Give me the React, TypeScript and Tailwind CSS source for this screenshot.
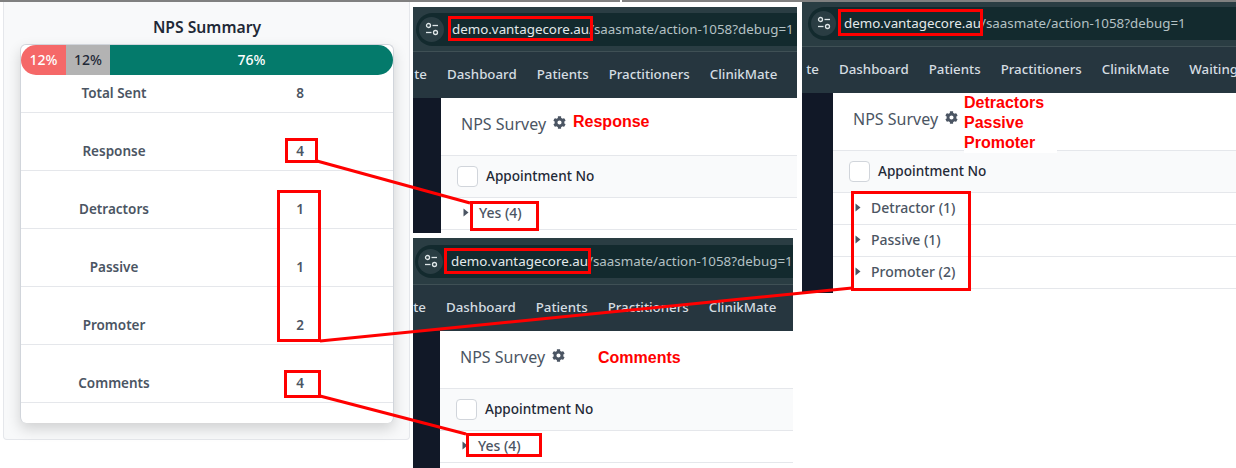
import { FaCog } from "react-icons/fa";

const font = { fontFamily: '"Noto Sans", sans-serif' };

const stats = [
  { label: "Total Sent", value: "8", tall: false },
  { label: "Response", value: "4", tall: true },
  { label: "Detractors", value: "1", tall: true },
  { label: "Passive", value: "1", tall: true },
  { label: "Promoter", value: "2", tall: true },
  { label: "Comments", value: "4", tall: true },
];

const navItems = ["Dashboard", "Patients", "Practitioners", "ClinikMate"];

const SiteIcon = () => (
  <svg width="14" height="14" viewBox="0 0 14 14" fill="none" stroke="#dfe6e8" strokeWidth="1.3">
    <circle cx="3.5" cy="3.5" r="2" />
    <path d="M7.5 3.5H13" />
    <circle cx="10.5" cy="10.5" r="2" />
    <path d="M1 10.5H6.5" />
  </svg>
);

const Caret = () => (
  <svg width="6" height="9" viewBox="0 0 6 9" className="shrink-0">
    <path d="M0.5 0.5L5.5 4.5L0.5 8.5Z" fill="#4b5563" />
  </svg>
);

type ShotProps = {
  className: string;
  strip: string;
  sidebar: string;
  crumb: string;
  nav: string[];
  rows: string[];
};

const Shot = ({ className, strip, sidebar, crumb, nav, rows }: ShotProps) => (
  <div className={`absolute flex flex-col overflow-hidden bg-white ${className}`}>
    <div className={`flex shrink-0 items-center border-b border-[#3f5055] bg-[#2a3d43] ${strip}`}>
      <div className="flex h-[33px] flex-1 items-center rounded-l-full bg-[#132a2e] pl-[3px]">
        <div className="grid h-[25px] w-[25px] shrink-0 place-items-center rounded-full bg-[#2a3d43]">
          <SiteIcon />
        </div>
        <div className="ml-[8px] whitespace-nowrap text-[13.35px] text-[#e3e9eb]">
          demo.vantagecore.au<span className="text-[#b4c1c4]">/saasmate/action-1058?debug=1</span>
        </div>
      </div>
    </div>
    <div className="flex h-[46px] shrink-0 items-center gap-[20px] overflow-hidden whitespace-nowrap bg-[#26363f] text-[13.3px] font-medium text-[#d5dde2]">
      <span className={`flex shrink-0 justify-end overflow-hidden ${crumb}`}>te</span>
      {nav.map((item) => (
        <span key={item}>{item}</span>
      ))}
    </div>
    <div className="flex min-h-0 flex-1">
      <div className={`shrink-0 bg-[#111827] ${sidebar}`} />
      <div className="flex min-w-0 flex-1 flex-col bg-white">
        <div className="flex h-[57px] shrink-0 items-center pb-[6px] pl-[20px] text-[#4b5563]">
          <span className="text-[16px]">NPS Survey</span>
          <FaCog className="mb-[2px] ml-[7px] h-[13px] w-[13px] text-[#4b5563]" />
        </div>
        <div className="flex h-[43px] shrink-0 items-center border-y border-[#e5e7eb] bg-[#f9fafb] pl-[16px]">
          <div className="h-[21px] w-[21px] rounded-[4px] border border-[#d1d5db] bg-white" />
          <span className="ml-[8px] text-[13.6px] font-medium text-[#1f2937]">Appointment No</span>
        </div>
        {rows.map((row) => (
          <div key={row} className="flex h-[32px] shrink-0 items-center border-b border-[#e5e7eb] pb-[2px] pl-[22px] text-[14px] font-medium text-[#4b5563]">
            <Caret />
            <span className="ml-[10px]">{row}</span>
          </div>
        ))}
      </div>
    </div>
  </div>
);

const RedBox = ({ className }: { className: string }) => (
  <div className={`absolute border-[3px] border-[#ff0000] ${className}`} />
);

const RedLabel = ({ className, children }: { className: string; children: React.ReactNode }) => (
  <div className={`absolute text-[16px] font-bold leading-[20px] text-[#ff0000] [font-family:'Liberation_Sans',Arial,sans-serif] ${className}`}>
    {children}
  </div>
);

export default function App() {
  return (
    <div className="relative h-[468px] w-[1236px] overflow-hidden bg-white" style={font}>
      <div className="flex h-[2px] w-full gap-[2px]">
        <div className="w-[620px] bg-[#808080]" />
        <div className="flex-1 bg-[#808080]" />
      </div>

      {/* NPS summary panel */}
      <div className="absolute left-[3px] top-[2px] h-[438px] w-[407px] rounded-b-[4px] border-x border-b border-[#e5e7eb] bg-[#f8f9fa] pl-[16px] pr-[15px]">
        <h2 className="mt-[13px] text-center text-[15.7px] font-semibold leading-[24px] text-[#1f2937]">NPS Summary</h2>
        <div className="mt-[5px] overflow-hidden rounded-[6px] border border-[#d1d5db] border-b-0 bg-white shadow-[0_6px_14px_rgba(0,0,0,0.16)]">
          <div className="flex h-[30px] overflow-hidden rounded-full text-center text-[14px] font-medium leading-[30px]">
            <div className="w-[45px] bg-[#f56868] text-white">12%</div>
            <div className="w-[44px] bg-[#b3b3b3] text-[#1f2937]">12%</div>
            <div className="flex-1 bg-[#047a6b] text-white">76%</div>
          </div>
          {stats.map((s) => (
            <div
              key={s.label}
              className={`grid grid-cols-2 items-end border-b border-[#e5e7eb] pb-[9px] text-center text-[13.5px] font-semibold leading-[20px] text-[#4b5563] ${s.tall ? "h-[58px]" : "h-[38px]"}`}
            >
              <span>{s.label}</span>
              <span>{s.value}</span>
            </div>
          ))}
          <div className="h-[20px]" />
        </div>
      </div>

      <Shot
        className="left-[413px] top-[7px] h-[226px] w-[384px]"
        strip="h-[45px] pl-[3px]"
        sidebar="w-[28px]"
        crumb="w-[14px]"
        nav={navItems}
        rows={["Yes (4)"]}
      />
      <Shot
        className="left-[413px] top-[238px] h-[230px] w-[380px]"
        strip="h-[47px] pl-[2px]"
        sidebar="w-[27px]"
        crumb="w-[13px]"
        nav={navItems}
        rows={["Yes (4)"]}
      />
      <Shot
        className="left-[802px] top-[2px] h-[291px] w-[434px]"
        strip="h-[45px] pb-[2px] pl-[6px]"
        sidebar="w-[31px]"
        crumb="w-[17px]"
        nav={[...navItems, "Waiting"]}
        rows={["Detractor (1)", "Passive (1)", "Promoter (2)"]}
      />

      {/* red annotations */}
      <RedLabel className="left-[573px] top-[112px]">Response</RedLabel>
      <RedLabel className="left-[598px] top-[348px]">Comments</RedLabel>
      <RedLabel className="left-[964px] top-[93px] h-[60px] w-[93px] bg-white">
        Detractors
        <br />
        Passive
        <br />
        Promoter
      </RedLabel>

      <RedBox className="left-[285px] top-[138px] h-[25px] w-[33px]" />
      <RedBox className="left-[277px] top-[190px] h-[152px] w-[44px]" />
      <RedBox className="left-[284px] top-[370px] h-[28px] w-[37px]" />
      <RedBox className="left-[448px] top-[16px] h-[25px] w-[145px]" />
      <RedBox className="left-[470px] top-[201px] h-[30px] w-[69px]" />
      <RedBox className="left-[444px] top-[248px] h-[26px] w-[147px]" />
      <RedBox className="left-[466px] top-[433px] h-[24px] w-[76px]" />
      <RedBox className="left-[838px] top-[9px] h-[27px] w-[145px]" />
      <RedBox className="left-[851px] top-[191px] h-[100px] w-[120px]" />

      <svg className="pointer-events-none absolute left-0 top-0" width="1236" height="468" fill="none" stroke="#ff0000" strokeWidth="3">
        <path d="M317 161L470 203" />
        <path d="M320 341L852 288" />
        <path d="M320 396L466 434" />
      </svg>
    </div>
  );
}
